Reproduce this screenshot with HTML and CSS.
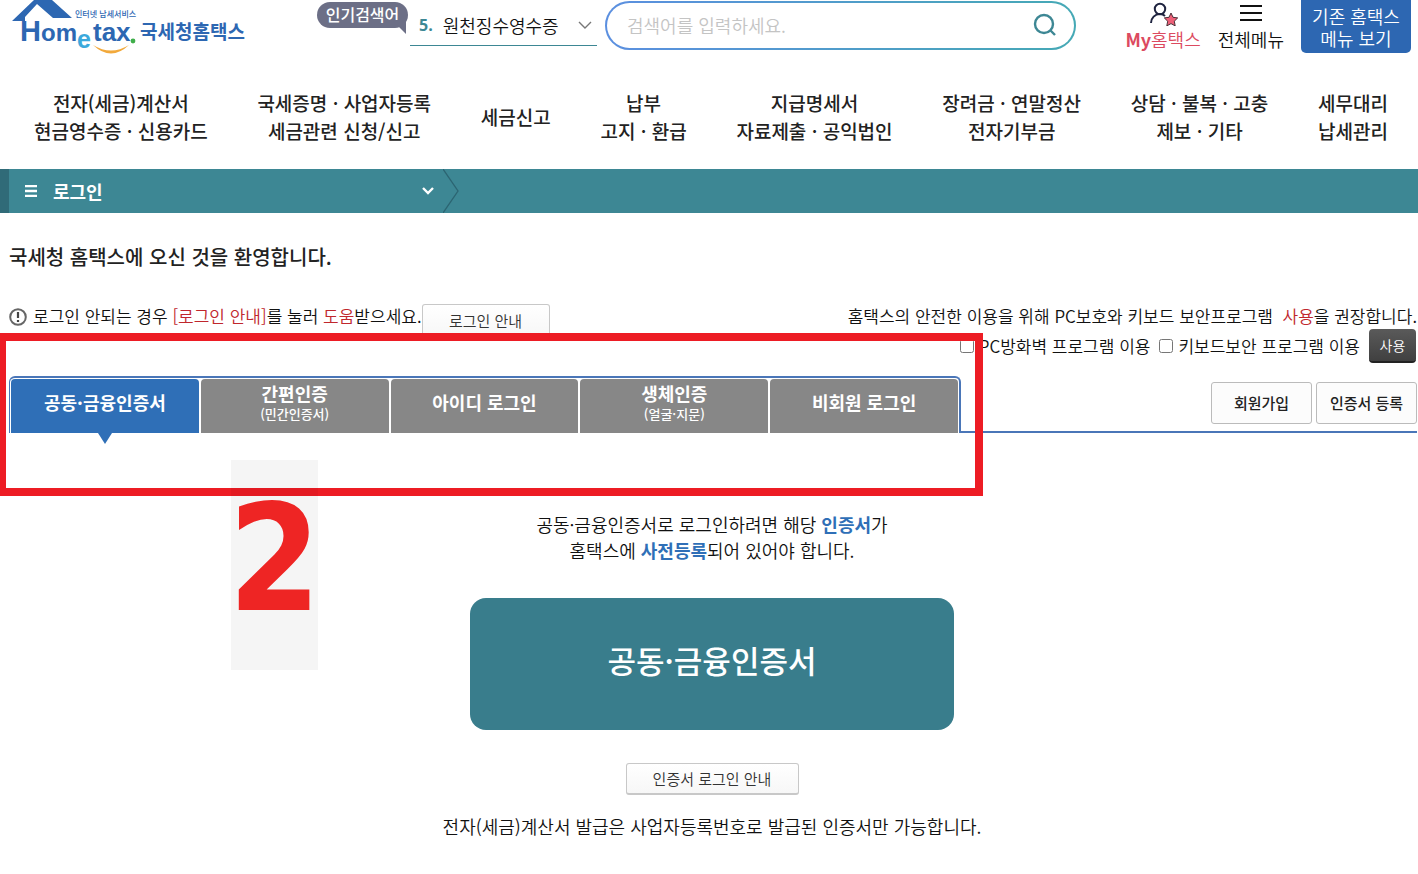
FILE: index.html
```html
<!DOCTYPE html>
<html lang="ko">
<head>
    <meta charset="UTF-8">
    <meta name="viewport" content="width=device-width, initial-scale=1.0">
    <title>국세청 홈택스</title>
    <link rel="stylesheet" href="styles.css">
</head>
<body>
    <header class="top">
        <a class="logo" href="#">
            <svg class="logo-mark" width="130" height="56" viewBox="0 0 130 56">
                <path d="M2 21L24 0H42L62 18H43L27 4L15 17V21Z" fill="#2d67b2"/>
                <text x="65" y="17" class="logo-tag">인터넷 납세서비스</text>
                <text x="10" y="41" class="logo-h">H</text>
                <text x="31" y="41" class="logo-om">om</text>
                <text x="67" y="48" class="logo-e">e</text>
                <text x="83" y="41" class="logo-tax">tax</text>
                <circle cx="123" cy="41" r="2.4" fill="#3fae49"/>
                <path d="M83 45Q101 62 119 45Q101 56 83 45Z" fill="#f2a93b"/>
            </svg>
            <span class="logo-text">국세청홈택스</span>
        </a>
        <div class="popular">
            <span class="popular-label">인기검색어</span>
            <button class="popular-item" type="button">
                <b>5.</b>
                <span>원천징수영수증</span>
                <svg width="14" height="8" viewBox="0 0 14 8"><path d="M1 1l6 6 6-6" fill="none" stroke="#777" stroke-width="1.4"/></svg>
            </button>
        </div>
        <form class="search">
            <input type="text" placeholder="검색어를 입력하세요." aria-label="검색어">
            <button type="button" aria-label="검색">
                <svg width="24" height="24" viewBox="0 0 24 24" fill="none" stroke="#3d8794" stroke-width="2.4"><circle cx="12" cy="11" r="9"/><path d="M18 17l5 5"/></svg>
            </button>
        </form>
        <div class="links">
            <a class="link my" href="#">
                <svg width="30" height="26" viewBox="0 0 30 26">
                    <circle cx="12" cy="9" r="5.2" fill="none" stroke="#1f2440" stroke-width="2"/>
                    <path d="M3 23c0-5 4-9 9-9 2 0 4 1 5 2" fill="none" stroke="#1f2440" stroke-width="2"/>
                    <path d="M23 13l2 4.300 4.700.6-3.400 3.300.9 4.700-4.200-2.300-4.200 2.300.9-4.700-3.400-3.300 4.700-.6z" fill="#ee6078" stroke="#4a3038"/>
                </svg>
                <span><b>My</b>홈택스</span>
            </a>
            <a class="link" href="#">
                <svg width="22" height="26" viewBox="0 0 22 26"><path d="M0 6h22M0 13h22M0 20h22" stroke="#111" stroke-width="2"/></svg>
                <span>전체메뉴</span>
            </a>
            <a class="old-menu" href="#">기존 홈택스<br>메뉴 보기</a>
        </div>
    </header>

    <nav class="menu">
        <a href="#">전자(세금)계산서<br>현금영수증 · 신용카드</a>
        <a href="#">국세증명 · 사업자등록<br>세금관련 신청/신고</a>
        <a href="#">세금신고</a>
        <a href="#">납부<br>고지 · 환급</a>
        <a href="#">지급명세서<br>자료제출 · 공익법인</a>
        <a href="#">장려금 · 연말정산<br>전자기부금</a>
        <a href="#">상담 · 불복 · 고충<br>제보 · 기타</a>
        <a href="#">세무대리<br>납세관리</a>
    </nav>

    <div class="location">
        <button class="location-item" type="button">
            <svg width="12" height="12" viewBox="0 0 12 12"><path d="M0 1h12M0 6h12M0 11h12" stroke="#fff" stroke-width="2.4"/></svg>
            <span>로그인</span>
            <svg class="location-arrow" width="12" height="8" viewBox="0 0 12 8"><path d="M1 1l5 5 5-5" fill="none" stroke="#fff" stroke-width="2.4"/></svg>
        </button>
        <svg width="16" height="44" viewBox="0 0 16 44"><path d="M0 0l15 22L0 44" fill="none" stroke="#2c6572" stroke-width="1.3"/></svg>
    </div>

    <main>
        <h1>국세청 홈택스에 오신 것을 환영합니다.</h1>

        <div class="notice">
            <div class="help">
                <svg width="18" height="20" viewBox="0 0 18 20"><circle cx="9" cy="10" r="7.8" fill="none" stroke="#666" stroke-width="2"/><path d="M9 5v6M9 13v2" stroke="#444" stroke-width="2.2"/></svg>
                <span>로그인 안되는 경우 <em>[로그인 안내]</em>를 눌러 <em>도움</em>받으세요.</span>
                <button class="btn" type="button">로그인 안내</button>
            </div>
            <div class="security">
                <p>홈택스의 안전한 이용을 위해 PC보호와 키보드 보안프로그램 &nbsp;<em>사용</em>을 권장합니다.</p>
                <div class="options">
                    <label><input type="checkbox">PC방화벽 프로그램 이용</label>
                    <label><input type="checkbox">키보드보안 프로그램 이용</label>
                    <button class="btn-dark" type="button">사용</button>
                </div>
            </div>
        </div>

        <div class="tab-bar">
            <div class="tabs">
                <button class="tab active" type="button">공동·금융인증서</button>
                <button class="tab" type="button">간편인증<small>(민간인증서)</small></button>
                <button class="tab" type="button">아이디 로그인</button>
                <button class="tab" type="button">생체인증<small>(얼굴·지문)</small></button>
                <button class="tab" type="button">비회원 로그인</button>
            </div>
            <div class="tab-side">
                <button class="btn-side" type="button">회원가입</button>
                <button class="btn-side" type="button">인증서 등록</button>
            </div>
        </div>

        <section class="login">
            <p>공동·금융인증서로 로그인하려면 해당 <strong>인증서</strong>가<br>홈택스에 <strong>사전등록</strong>되어 있어야 합니다.</p>
            <button class="btn-login" type="button">공동·금융인증서</button>
            <button class="btn btn-guide" type="button">인증서 로그인 안내</button>
            <p>전자(세금)계산서 발급은 사업자등록번호로 발급된 인증서만 가능합니다.</p>
        </section>
    </main>

    <div class="mark-box"></div>
    <div class="mark-number">2</div>
</body>
</html>
```
FILE: styles.css
```css
* {
    box-sizing: border-box;
}

body {
    margin: 0;
    position: relative;
    font-family: "Noto Sans CJK KR", sans-serif;
    font-size: 17px;
    font-weight: 350;
    line-height: 26px;
    color: #111;
    background: #fff;
}

a {
    color: inherit;
    text-decoration: none;
}

button,
input {
    font: inherit;
    color: inherit;
}

button {
    padding: 0;
    border: 0;
    background: none;
    cursor: pointer;
}

p {
    margin: 0;
}

b,
strong {
    font-weight: 700;
}

em {
    font-style: normal;
    color: #c0272d;
}

svg {
    flex: none;
}

.top {
    display: flex;
    align-items: flex-start;
    height: 56px;
    padding: 0 7px 0 10px;
}

.logo {
    display: flex;
    align-items: center;
    width: 307px;
}

.logo-mark text {
    font-family: "Liberation Sans", "Noto Sans CJK KR", sans-serif;
    font-weight: 700;
    fill: #2d67b2;
}

.logo-mark .logo-h {
    font-size: 29px;
}

.logo-mark .logo-om {
    font-size: 24px;
}

.logo-mark .logo-tax {
    font-size: 26px;
}

.logo-mark .logo-e {
    font-size: 25px;
    fill: #3ba9dc;
}

.logo-mark .logo-tag {
    font-size: 8px;
    font-weight: 500;
}

.logo-text {
    padding-top: 6px;
    font-size: 19px;
    font-weight: 700;
    color: #2d67b2;
}

.popular {
    display: flex;
    gap: 2px;
}

.popular-label {
    position: relative;
    width: 91px;
    height: 26px;
    margin-top: 2px;
    border-radius: 13px;
    background: #6c6f86;
    color: #fff;
    font-size: 16px;
    font-weight: 500;
    line-height: 24px;
    text-align: center;
}

.popular-label::after {
    content: "";
    position: absolute;
    right: 2px;
    bottom: -6px;
    border-top: 14px solid #6c6f86;
    border-left: 14px solid transparent;
}

.popular-item {
    display: flex;
    align-items: center;
    gap: 10px;
    width: 187px;
    height: 46px;
    padding: 4px 5px 0 9px;
    border-bottom: 1px solid #3d8794;
    font-size: 18px;
}

.popular-item b {
    font-family: "Open Sans", sans-serif;
    font-size: 16px;
    color: #3d8794;
}

.popular-item svg {
    margin-left: auto;
}

.search {
    display: flex;
    align-items: center;
    flex: 1;
    max-width: 471px;
    height: 49px;
    margin: 1px 0 0 8px;
    padding: 0 18px 2px 20px;
    border: 2px solid transparent;
    border-radius: 25px;
    background: linear-gradient(#fff, #fff) padding-box, linear-gradient(90deg, #5b8fe0, #45a9b5) border-box;
}

.search input {
    flex: 1;
    min-width: 0;
    padding: 0;
    border: 0;
    outline: 0;
    background: none;
    font-size: 18px;
}

.search input::placeholder {
    color: #c4c4c4;
}

.search button {
    display: flex;
}

.links {
    display: flex;
    gap: 17px;
    margin-left: auto;
}

.link {
    display: flex;
    flex-direction: column;
    align-items: center;
    font-size: 18px;
    white-space: nowrap;
}

.my {
    color: #dc4a60;
}

.old-menu {
    width: 110px;
    height: 53px;
    padding-top: 5px;
    border-radius: 0 0 5px 5px;
    background: #2d67b2;
    color: #fff;
    font-size: 18px;
    line-height: 22px;
    text-align: center;
}

.menu {
    display: flex;
    justify-content: space-between;
    align-items: center;
    height: 113px;
    padding: 8px 30px 0 34px;
    font-size: 19px;
    font-weight: 500;
    line-height: 28px;
    color: #222;
    text-align: center;
    white-space: nowrap;
}

.location {
    display: flex;
    height: 44px;
    border-left: 9px solid #306b78;
    background: #3d8794;
}

.location-item {
    display: flex;
    align-items: center;
    gap: 16px;
    width: 434px;
    padding: 0 9px 0 16px;
    color: #fff;
    font-size: 18px;
    font-weight: 700;
}

.location-arrow {
    margin-left: auto;
}

main {
    padding: 0 1px 0 9px;
}

h1 {
    margin: 31px 0 33px;
    font-size: 20px;
    font-weight: 500;
    line-height: 26px;
    color: #222;
}

.notice {
    display: flex;
    justify-content: space-between;
    height: 73px;
    white-space: nowrap;
}

.help {
    display: flex;
    align-items: flex-start;
}

.help svg {
    margin: 4px 6px 0 0;
}

.btn {
    border: 1px solid #c8c8c8;
    border-bottom-width: 2px;
    border-radius: 3px;
    background: linear-gradient(#fff, #f7f7f7);
    font-size: 15px;
    color: #333;
}

.help .btn {
    width: 128px;
    height: 34px;
    margin-top: 1px;
}

.security {
    display: flex;
    flex-direction: column;
    align-items: flex-end;
}

.options {
    display: flex;
    align-items: center;
    gap: 9px;
    padding-right: 1px;
}

.options label {
    display: flex;
    align-items: center;
    gap: 5px;
}

.options input {
    width: 14px;
    height: 14px;
    margin: 0;
}

.btn-dark {
    width: 47px;
    height: 34px;
    border-bottom: 2px solid #222;
    border-radius: 4px;
    background: linear-gradient(#5a5a5a, #404040);
    color: #fff;
    font-size: 14px;
}

.tab-bar {
    display: flex;
    justify-content: space-between;
    height: 57px;
    background: linear-gradient(#4a76b8, #4a76b8) right bottom / calc(100% - 950px) 2px no-repeat;
}

.tabs {
    display: flex;
    gap: 2px;
    width: 952px;
    padding: 1px 1px 0;
    border: 2px solid #4a76b8;
    border-width: 2px 2px 0 1px;
    border-radius: 6px 6px 0 0;
}

.tab {
    position: relative;
    flex: 1;
    padding-bottom: 8px;
    border-radius: 4px 4px 0 0;
    background: #878787;
    color: #fff;
    font-size: 18px;
    font-weight: 700;
    line-height: 20px;
}

.tab small {
    display: block;
    margin-top: 4px;
    font-size: 13px;
    font-weight: 500;
    line-height: 14px;
}

.tab.active {
    background: #2f6fb7;
}

.tab.active::after {
    content: "";
    position: absolute;
    top: 100%;
    left: 50%;
    margin-left: -7px;
    border: 7px solid transparent;
    border-top: 11px solid #2f6fb7;
    border-bottom: 0;
}

.tab-side {
    display: flex;
    gap: 4px;
    padding-top: 6px;
}

.btn-side {
    width: 101px;
    height: 42px;
    border: 1px solid #bbb;
    border-radius: 3px;
    background: #fcfcfc;
    color: #222;
    font-size: 15px;
    font-weight: 500;
}

.login {
    display: flex;
    flex-direction: column;
    align-items: center;
    padding: 78px 2px 34px 0;
    font-size: 18px;
    text-align: center;
}

.login strong {
    color: #2f6fb7;
}

.btn-login {
    width: 484px;
    height: 132px;
    margin: 35px 0 33px;
    padding-bottom: 8px;
    border-radius: 16px;
    background: #397d8c;
    color: #fff;
    font-size: 31px;
    font-weight: 500;
}

.btn-guide {
    width: 173px;
    height: 32px;
    margin-bottom: 18px;
}

/* highlight over the login tabs */
.mark-box {
    position: absolute;
    top: 333px;
    left: 0;
    width: 983px;
    height: 163px;
    border: 8px solid #ed1c24;
    border-left-width: 6px;
    pointer-events: none;
}

.mark-number {
    position: absolute;
    top: 460px;
    left: 231px;
    display: flex;
    justify-content: center;
    width: 87px;
    height: 210px;
    background: rgba(0, 0, 0, 0.04);
    color: #ee2524;
    font-family: "DejaVu Sans Condensed", "DejaVu Sans", sans-serif;
    font-size: 148px;
    font-weight: 700;
    line-height: 198px;
    pointer-events: none;
}
```
